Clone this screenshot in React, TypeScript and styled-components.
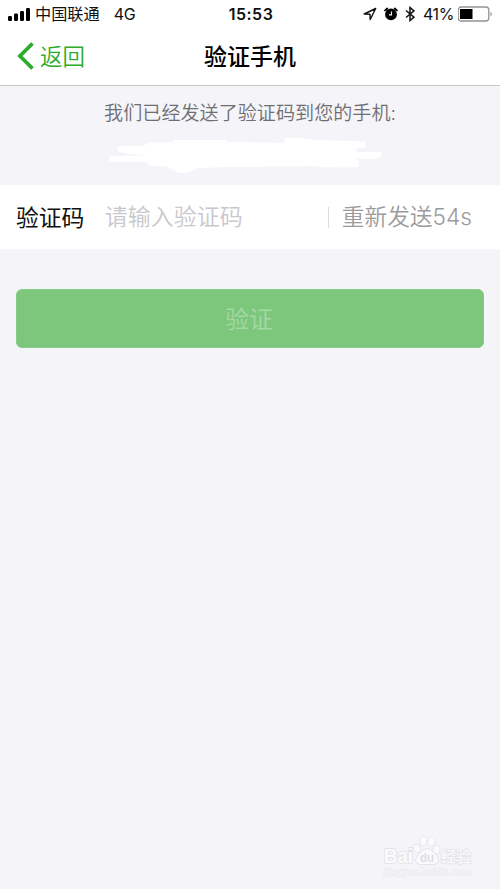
import React from "react";
import styled, { createGlobalStyle } from "styled-components";

const GlobalStyle = createGlobalStyle`
  * { box-sizing: border-box; }
  body { margin: 0; background: #f4f4f9; font-family: Inter, "Noto Sans CJK SC", sans-serif; }
`;

const Screen = styled.main`
  display: flex;
  flex-direction: column;
  width: 500px;
  height: 889px;
  overflow: hidden;
  background: #f4f4f9;
`;

const StatusBar = styled.div`
  display: grid;
  grid-template-columns: 1fr auto 1fr;
  align-items: center;
  height: 28px;
  padding: 0 7px 0 8px;
  background: #fff;
  color: #111;
  font-size: 16px;
  line-height: 28px;
  white-space: nowrap;
`;

const StatusGroup = styled.div<{ $end?: boolean }>`
  display: flex;
  align-items: center;
  justify-content: ${(p) => (p.$end ? "flex-end" : "flex-start")};
  svg { display: block; flex: none; }
`;

const StatusIcons = styled.div`
  display: flex;
  align-items: center;
  gap: 7px;
`;

const Carrier = styled.span`
  margin: 0 14px 0 5px;
  font-size: 16.2px;
`;

const Network = styled.span`
  font-size: 16px;
  letter-spacing: -0.4px;
`;

const Clock = styled.span`
  padding-left: 1px;
  font-weight: 600;
  letter-spacing: 0.5px;
`;

const Percent = styled.span`
  margin: 0 4px 0 8px;
  letter-spacing: -0.4px;
`;

const NavBar = styled.header`
  display: grid;
  grid-template-columns: 1fr auto 1fr;
  align-items: center;
  height: 58px;
  padding: 0 17px 4px;
  border-bottom: 1px solid #c9c9cc;
  background: #fff;
`;

const BackButton = styled.button`
  display: flex;
  align-items: center;
  gap: 5px;
  padding: 0;
  border: 0;
  background: none;
  color: #2bac2b;
  font: 350 22.5px/32px "Noto Sans CJK SC", sans-serif;
  svg { position: relative; top: 1px; }
`;

const Title = styled.h1`
  margin: 0;
  color: #000;
  font: 500 23px/32px "Noto Sans CJK SC", sans-serif;
`;

const Notice = styled.section`
  display: flex;
  flex-direction: column;
  align-items: center;
  height: 99px;
  padding-top: 12px;
`;

const NoticeText = styled.p`
  margin: 0;
  color: #6f6f73;
  font: 350 19.1px/30px Inter, "Noto Sans CJK SC", sans-serif;
`;

const Redaction = styled.svg`
  display: block;
  margin-top: 10px;
  margin-right: 10px;
`;

const CodeRow = styled.div`
  display: flex;
  align-items: center;
  height: 64px;
  padding: 0 28px 0 16px;
  background: #fff;
`;

const Label = styled.label`
  width: 89px;
  color: #111;
  font: 400 22.8px/34px "Noto Sans CJK SC", sans-serif;
`;

const CodeInput = styled.input`
  width: 223px;
  height: 40px;
  padding: 0 0 4px;
  border: 0;
  outline: 0;
  background: transparent;
  font: 350 23px/34px "Noto Sans CJK SC", sans-serif;
  &::placeholder { color: #c8c8ce; opacity: 1; }
`;

const Resend = styled.span`
  display: flex;
  align-items: center;
  color: #9b9b9b;
  font: 350 22.7px/34px Inter, "Noto Sans CJK SC", sans-serif;
  white-space: nowrap;
  &::before {
    content: "";
    width: 1px;
    height: 21px;
    margin-right: 13px;
    background: #dcdcdc;
  }
`;

const Submit = styled.button`
  height: 59px;
  margin: 40px 16px 0;
  padding: 0 2px 2px 0;
  border: 1px solid #86cb87;
  border-radius: 6px;
  background: #7dc77d;
  color: #a4d8a4;
  font: 350 24px/34px "Noto Sans CJK SC", sans-serif;
`;

const Watermark = styled.footer`
  width: 92px;
  margin: auto 26px 9px auto;
  font-family: "Liberation Sans", "Noto Sans CJK SC", sans-serif;
  svg { display: block; overflow: visible; }
`;

const Signal = () => (
  <svg width="22" height="14" viewBox="0 0 22 14" fill="#000">
    <rect x="0" y="9" width="4" height="5" rx="1.2" />
    <rect x="6" y="6.500" width="4" height="7.500" rx="1.2" />
    <rect x="12" y="4" width="4" height="10" rx="1.2" />
    <rect x="18" y="1" width="4" height="13" rx="1.2" />
  </svg>
);

const LocationArrow = () => (
  <svg width="14" height="14" viewBox="0 0 14 14" fill="none" stroke="#111" strokeWidth="1.4" strokeLinejoin="round">
    <path d="M12.700 1.500 1.200 7l5.800.2.200 5.300z" />
  </svg>
);

const Alarm = () => (
  <svg width="14" height="14" viewBox="0 0 14 14">
    <circle cx="7" cy="7.4" r="5.9" fill="#000" />
    <path d="M1.100 3.400 3.300 1.500M12.900 3.400 10.700 1.500" stroke="#000" strokeWidth="1.9" strokeLinecap="round" />
    <path d="M7.500 4.400v3.500H5" fill="none" stroke="#fff" strokeWidth="1.1" />
  </svg>
);

const Bluetooth = () => (
  <svg width="10" height="16" viewBox="0 0 10 16" fill="none" stroke="#111" strokeWidth="1.5">
    <path d="m1 4.500 8 6.600-4 3.400v-13l4 3.400-8 6.600" />
  </svg>
);

const Battery = () => (
  <svg width="35" height="16" viewBox="0 0 35 16">
    <rect x=".2" y="1" width="30.6" height="14" rx="3" fill="none" stroke="#929292" strokeWidth="1.3" />
    <rect x="2" y="3" width="12.500" height="10" fill="#000" />
    <path d="M32.500 5.400q2.600 2.600 0 5.200z" fill="#929292" />
  </svg>
);

const WatermarkLogo = () => (
  <svg width="92" height="46" viewBox="0 0 92 46" fill="#fbfbfd" stroke="#e4e4e8" strokeWidth="1.8" paintOrder="stroke" strokeLinejoin="round">
    <text x="2" y="29" fontSize="20" fontWeight="700" textLength="29" lengthAdjust="spacingAndGlyphs">Bai</text>
    <ellipse cx="35" cy="14.500" rx="3" ry="3.800" transform="rotate(-15 35 14.500)" />
    <ellipse cx="41.500" cy="7" rx="3.200" ry="4.200" />
    <ellipse cx="49.500" cy="7.500" rx="3.200" ry="4.200" />
    <ellipse cx="54.500" cy="15.500" rx="3" ry="3.800" transform="rotate(15 54.500 15.500)" />
    <path d="M45 15c-4 0-5.500 4-8.500 6.500-4 3.500-2.500 8.500 2 8.500h13c5 0 6-5 2.500-8.500-3-3-5-6.500-9-6.500z" />
    <text x="38" y="28" fontSize="13.500" fontWeight="700" fill="#dddde2" stroke="none" textLength="14" lengthAdjust="spacingAndGlyphs">du</text>
    <text x="59" y="28" fontSize="15" fontWeight="500" textLength="30">经验</text>
    <text x="2" y="41" fontSize="10.500" fontFamily="Liberation Serif" strokeWidth="1" fill="#f8f8fb" stroke="#e8e8ec" textLength="87" lengthAdjust="spacingAndGlyphs">jingyan.baidu.com</text>
  </svg>
);

export default function App() {
  return (
    <>
      <GlobalStyle />
      <Screen>
        <StatusBar>
          <StatusGroup>
            <Signal />
            <Carrier>中国联通</Carrier>
            <Network>4G</Network>
          </StatusGroup>
          <Clock>15:53</Clock>
          <StatusGroup $end>
            <StatusIcons>
              <LocationArrow />
              <Alarm />
              <Bluetooth />
            </StatusIcons>
            <Percent>41%</Percent>
            <Battery />
          </StatusGroup>
        </StatusBar>
        <NavBar>
          <BackButton>
            <svg width="18" height="28" viewBox="0 0 18 28" fill="none" stroke="currentColor" strokeWidth="3.8">
              <path d="M15.500 1.500 3 14l12.500 12.500" />
            </svg>
            返回
          </BackButton>
          <Title>验证手机</Title>
        </NavBar>
        <Notice>
          <NoticeText>我们已经发送了验证码到您的手机:</NoticeText>
          <Redaction width="272" height="35.33" viewBox="27 129 816 106" fill="#fff">
            <path d="M53 154H128L145 143 222 141V135H375L380 140 552 143 555 129H605L660 136 796 139V158L770 160V171H843V186Q830 193 810 193L770 190 777 197V216Q700 220 640 214L380 216 290 220 270 232 240 235 215 225 200 215 144 210V200H27V184L144 181 90 177 53 170Z" />
          </Redaction>
        </Notice>
        <CodeRow>
          <Label htmlFor="code">验证码</Label>
          <CodeInput id="code" placeholder="请输入验证码" />
          <Resend>重新发送54s</Resend>
        </CodeRow>
        <Submit>验证</Submit>
        <Watermark>
          <WatermarkLogo />
        </Watermark>
      </Screen>
    </>
  );
}
